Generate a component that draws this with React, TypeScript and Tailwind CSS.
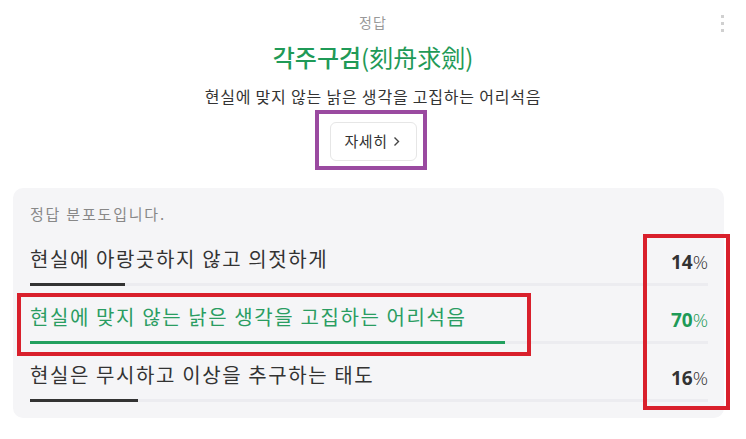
import React from 'react';

type Row = { label: string; pct: number; correct?: boolean };

const rows: Row[] = [
    { label: '현실에 아랑곳하지 않고 의젓하게', pct: 14 },
    { label: '현실에 맞지 않는 낡은 생각을 고집하는 어리석음', pct: 70, correct: true },
    { label: '현실은 무시하고 이상을 추구하는 태도', pct: 16 },
];

const DistRow: React.FC<{ row: Row }> = ({ row }) => (
    <div className="flex flex-col">
        <div className="flex items-center justify-between h-[24px]">
            <span className={`text-[20px] tracking-[1.6px] ${row.correct ? 'text-[#2a9d62]' : 'text-[#333]'}`}>
                {row.label}
            </span>
            <span className={`font-['Open_Sans',sans-serif] text-[19px] mt-[6px] ${row.correct ? 'text-[#1f9a57]' : 'text-[#333]'}`}>
                <span className="font-bold">{row.pct}</span>
                <span className="font-light">%</span>
            </span>
        </div>
        <div className="mt-[12px] h-[3px] bg-[#ececf0]">
            <div
                className={`h-full ${row.correct ? 'bg-[#22a05e]' : 'bg-[#333]'}`}
                style={{ width: `${row.pct}%` }}
            />
        </div>
    </div>
);

export default function App() {
    return (
        <div className="relative w-[746px] h-[439px] bg-white overflow-hidden font-['Noto_Sans_CJK_KR',sans-serif]">
            {/* kebab */}
            <div className="absolute left-[721px] top-[15px] flex flex-col gap-[4px]">
                <span className="w-[3px] h-[3px] bg-[#d0d0d0]" />
                <span className="w-[3px] h-[3px] bg-[#d0d0d0]" />
                <span className="w-[3px] h-[3px] bg-[#d0d0d0]" />
            </div>

            <div className="flex flex-col items-center pt-[12px]">
                <p className="text-[14px] leading-[20px] tracking-[1px] text-[#999]">정답</p>
                <h1 className="mt-[10px] text-[24px] leading-[30px] text-[#1f9a57]">
                    <span className="font-medium">각주구검</span>
                    <span className="font-normal">(刻舟求劍)</span>
                </h1>
                <p className="mt-[14px] text-[16px] leading-[20px] tracking-[0.8px] text-[#333]">
                    현실에 맞지 않는 낡은 생각을 고집하는 어리석음
                </p>
                <button className="mt-[16px] w-[87px] h-[39px] rounded-[6px] border border-[#e6e6e6] bg-white text-[15px] tracking-[0.5px] text-[#333] flex items-center justify-center gap-[5px]">
                    자세히
                    <svg width="9" height="11" viewBox="0 0 9 11" fill="none" stroke="#444" strokeWidth="1.4">
                        <path d="M2.5 1.5 L6.5 5.5 L2.5 9.5" />
                    </svg>
                </button>
            </div>

            <div className="mt-[27px] ml-[13px] w-[711px] h-[230px] rounded-[10px] bg-[#f5f5f7] pl-[17px] pr-[16px] pt-[16px]">
                <p className="text-[15px] leading-[20px] tracking-[1.8px] text-[#888]">정답 분포도입니다.</p>
                <div className="mt-[23px] flex flex-col gap-[19px]">
                    {rows.map((r) => (
                        <DistRow key={r.label} row={r} />
                    ))}
                </div>
            </div>

            {/* annotation boxes */}
            <div className="absolute left-[315px] top-[110px] w-[112px] h-[60px] border-[4px] border-[#9a4aa0]" />
            <div className="absolute left-[17px] top-[293px] w-[514px] h-[63px] border-[4px] border-[#d9202c]" />
            <div className="absolute left-[643px] top-[234px] w-[87px] h-[176px] border-[4px] border-[#d9202c]" />
        </div>
    );
}
